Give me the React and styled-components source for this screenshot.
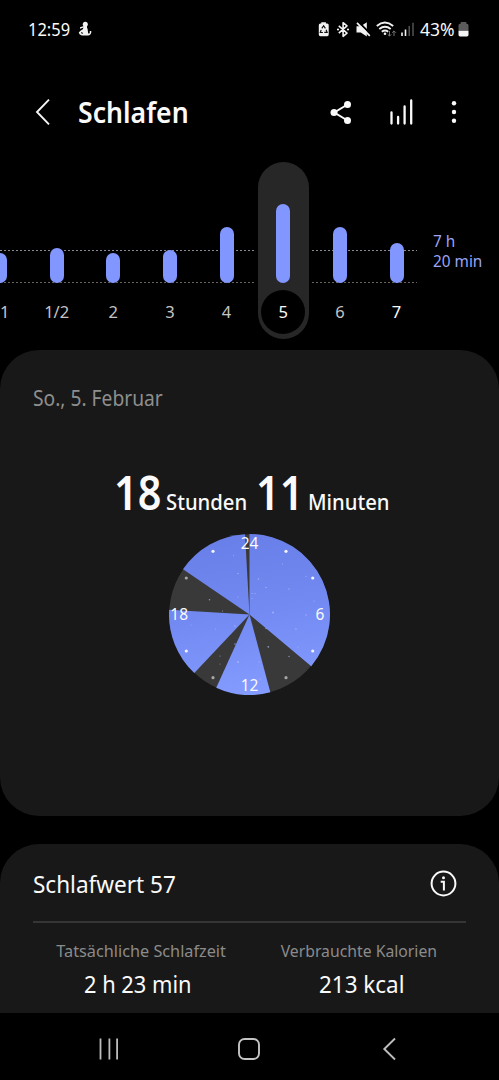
import React from 'react'
import styled, { createGlobalStyle } from 'styled-components'

const days = [
    { id: 1, label: '31', height: 30 },
    { id: 2, label: '1/2', height: 35 },
    { id: 3, label: '2', height: 30 },
    { id: 4, label: '3', height: 33 },
    { id: 5, label: '4', height: 56 },
    { id: 6, label: '5', height: 79, selected: true },
    { id: 7, label: '6', height: 56 },
    { id: 8, label: '7', height: 40, today: true },
];

const stats = [
    { id: 1, label: 'Tatsächliche Schlafzeit', value: '2 h 23 min', labelScale: 0.985, valueScale: 0.95, padding: '0 7px 0 0' },
    { id: 2, label: 'Verbrauchte Kalorien', value: '213 kcal', labelScale: 0.955, valueScale: 0.975, padding: '0 0 0 6px' },
];

// start and end angle of every sleep phase, clockwise from midnight
const phases = [
    [0, 129.9],
    [165, 204.4],
    [223.3, 273.3],
    [304.3, 356.8],
];

const hours = [
    { label: '24', x: 80.5, y: 15.2 },
    { label: '6', x: 151, y: 86.2 },
    { label: '12', x: 80.5, y: 156.5 },
    { label: '18', x: 10.2, y: 86.2 },
];

const stars = [
    [89.5, 45, 0.8], [97, 53.5, 0.7], [113.5, 30, 0.6], [120, 55, 0.7], [104, 78.5, 0.9],
    [137, 42.5, 0.6], [145, 67, 0.6], [137, 81, 0.7], [127, 95, 0.8], [69, 39.5, 0.7],
    [64.5, 21.5, 0.5], [83, 59.5, 0.6], [86, 59.5, 0.6], [83, 64.5, 0.5], [69, 63, 0.6],
    [40.5, 65.8, 0.8], [53.5, 77, 0.6], [99.3, 112.8, 0.9], [120, 122.5, 0.7], [97, 94.5, 0.7],
    [129, 113, 0.6], [66, 110, 0.8], [66, 92, 0.7], [51, 122, 0.6], [51, 130, 0.5],
    [69, 128, 0.9], [90, 128, 0.6], [91, 145, 0.6], [22, 91, 0.5], [46.5, 95, 0.5],
];

const point = (angle, r) => {
    const rad = (angle * Math.PI) / 180;
    return [80.5 + r * Math.sin(rad), 80.5 - r * Math.cos(rad)];
};

const wedge = ([from, to]) => {
    const [x1, y1] = point(from, 80.5);
    const [x2, y2] = point(to, 80.5);
    return `M80.5 80.5 L${x1} ${y1} A80.5 80.5 0 ${to - from > 180 ? 1 : 0} 1 ${x2} ${y2} Z`;
};

const inPhase = (angle) => phases.some(([from, to]) => angle >= from && angle <= to);

const SleepClock = () => (
    <Clock viewBox="0 0 161 161">
        <defs>
            <linearGradient id="sleep" gradientUnits="userSpaceOnUse" x1="60" y1="0" x2="85" y2="161">
                <stop offset="0" stopColor="#687ee8" />
                <stop offset="0.5" stopColor="#728af2" />
                <stop offset="1" stopColor="#849bff" />
            </linearGradient>
        </defs>
        <circle cx="80.5" cy="80.5" r="80.3" fill="#393939" />
        {phases.map(phase => (
            <path key={phase[0]} d={wedge(phase)} fill="url(#sleep)" />
        ))}
        {stars.map(([x, y, r]) => (
            <circle key={`${x}-${y}`} cx={x} cy={y} r={r} fill="#c6cfff" opacity="0.6" />
        ))}
        {[30, 60, 120, 150, 210, 240, 300, 330].map(angle => {
            const [x, y] = point(angle, 73);
            return <circle key={angle} cx={x} cy={y} r="1.6" fill={inPhase(angle) ? '#f1f3ff' : '#a6a6a6'} />;
        })}
        {hours.map(hour => (
            <text key={hour.label} x={hour.x} y={hour.y} textAnchor="middle">{hour.label}</text>
        ))}
    </Clock>
)

const StatusIcons = () => (
    <svg width="98" height="18" viewBox="318 20 98 18" fill="none">
        {/* battery saver */}
        <path d="M318.800 25q0-1.500 1.500-1.500h1V22.300h4.600v1.200h1.300q1.500 0 1.500 1.500v9.500q0 1.700-1.500 1.700h-6.900q-1.500 0-1.500-1.700z" fill="#f2f2f2" />
        <path d="M321.800 28.300l1.800-2.600 1.800 2.600M326.100 29.700l1 2.600h-2.800M322.900 32.500h-2.600l.9-2.600" stroke="#111" strokeWidth="1.200" />
        {/* bluetooth */}
        <path d="M338.800 25.800l8.200 7.400-3.900 3.100V22.700l3.900 3.100-8.200 7.400" stroke="#f2f2f2" strokeWidth="1.600" strokeLinejoin="round" />
        <circle cx="338" cy="29.500" r="1.100" fill="#f2f2f2" />
        <circle cx="348" cy="29.500" r="1.100" fill="#f2f2f2" />
        {/* muted */}
        <path d="M356.500 26.200h4.300l6-4v14.300l-6-4h-4.300z" fill="#f2f2f2" />
        <path d="M358 21.500l13 13" stroke="#000" strokeWidth="2" />
        <path d="M357 22.800l12.800 13" stroke="#f2f2f2" strokeWidth="1.700" />
        {/* wifi */}
        <path d="M376.800 26q8-6.800 16.400 0M379.300 29q5.700-4.500 11.400 0M381.800 31.700q3.200-2.400 6.400 0" stroke="#f2f2f2" strokeWidth="1.900" />
        <circle cx="385" cy="33.700" r="1.300" fill="#f2f2f2" />
        <path d="M389.500 31v5M387.700 34.300l1.800 1.800 1.800-1.800M394 36v-5M392.200 32.700l1.800-1.800 1.800 1.800" stroke="#777" strokeWidth="1" />
        {/* mobile signal */}
        <path d="M402 32.500V36M405.500 29.500V36" stroke="#f2f2f2" strokeWidth="1.600" />
        <path d="M409.200 26V36M413 22.700V36" stroke="#5e5e5e" strokeWidth="1.300" />
    </svg>
)

const App = () => (
    <Screen>
        <GlobalStyle />
        <StatusBar>
            <Time>12:59</Time>
            <svg width="14" height="16" viewBox="0 0 14 16" fill="#f2f2f2">
                <circle cx="7.300" cy="3.200" r="2.500" />
                <path d="M6 5h3q-.3 1.500.6 3l.6 4.500h1.200q.6-1 .4-2.500h1.500q.4 3.500-3 4.600H4Q1.200 13.800.7 11.500L2.800 9.500l2-1.200L5.500 6.500 2 7.800V6.300z" />
                <path d="M3 11.700l2 .6" stroke="#000" strokeWidth="1" />
            </svg>
            <StatusRight>
                <StatusIcons />
                <Percent>43%</Percent>
                <svg width="11" height="15" viewBox="0 0 11 15">
                    <path d="M.5 3.300q0-1.500 1.500-1.500h.7V0h5.600v1.800H9q1.500 0 1.500 1.500V8.800H.5z" fill="#5b5b5b" />
                    <path d="M.5 8.800h10v3.900q0 1.700-1.500 1.700H2Q.5 14.400.5 12.700z" fill="#f5f5f5" />
                </svg>
            </StatusRight>
        </StatusBar>

        <Header>
            <svg width="16" height="28" viewBox="0 0 16 28" fill="none">
                <path d="M14 1.700L2 14l12 12.300" stroke="#f5f5f5" strokeWidth="1.900" />
            </svg>
            <Title>Schlafen</Title>
            <Actions>
                <svg width="22" height="25" viewBox="0 0 22 25">
                    <path d="M17.500 4.500L4.300 12.500 17.500 20.500" fill="none" stroke="#fafafa" strokeWidth="2" />
                    <g fill="#fafafa">
                        <circle cx="17.500" cy="4.500" r="3.500" />
                        <circle cx="4" cy="12.500" r="3.500" />
                        <circle cx="17.500" cy="20.500" r="3.500" />
                    </g>
                </svg>
                <svg width="24" height="26" viewBox="0 0 24 26" stroke="#fafafa" strokeWidth="2.300" strokeLinecap="round">
                    <path d="M1.500 13.500V24.500M8.100 18V24.500M14.600 7.500V24.500M21.200 1.500V24.500" />
                </svg>
                <svg width="6" height="24" viewBox="0 0 6 24" fill="#fafafa">
                    <circle cx="3" cy="3.300" r="2.200" />
                    <circle cx="3" cy="12" r="2.200" />
                    <circle cx="3" cy="20.800" r="2.200" />
                </svg>
            </Actions>
        </Header>

        <Chart>
            <GridLine $top={88} $color="#8b8b95" />
            <GridLine $top={120} $color="#67655b" />
            <Days>
                {days.map(day => (
                    <Day key={day.id} $selected={day.selected}>
                        <BarSlot>
                            <Bar style={{ height: day.height }} />
                        </BarSlot>
                        <DayLabel $selected={day.selected} $bright={day.selected || day.today}>{day.label}</DayLabel>
                    </Day>
                ))}
            </Days>
            <Goal>
                <span>7 h</span>
                <span>20 min</span>
            </Goal>
        </Chart>

        <DurationCard>
            <DateText>So., 5. Februar</DateText>
            <Duration>
                <Amount>18</Amount>
                <Unit $width={90}>Stunden</Unit>
                <Amount>11</Amount>
                <Unit $width={78}>Minuten</Unit>
            </Duration>
            <SleepClock />
        </DurationCard>

        <ScoreCard>
            <ScoreHeader>
                <ScoreTitle>Schlafwert 57</ScoreTitle>
                <InfoIcon width="27" height="27" viewBox="0 0 27 27">
                    <circle cx="13.500" cy="13.500" r="11.900" strokeWidth="2" />
                    <path d="M10.700 11.800h3.200V20.500" strokeWidth="2" />
                    <circle cx="13.500" cy="7.700" r="1.500" fill="#fafafa" stroke="none" />
                </InfoIcon>
            </ScoreHeader>
            <Stats>
                {stats.map(stat => (
                    <Stat key={stat.id}>
                        <StatLabel $scale={stat.labelScale}>{stat.label}</StatLabel>
                        <StatValue $scale={stat.valueScale} $padding={stat.padding}>{stat.value}</StatValue>
                    </Stat>
                ))}
            </Stats>
        </ScoreCard>

        <NavBar>
            <svg width="20" height="24" viewBox="0 0 20 24" stroke="#bdbdbd" strokeWidth="1.800">
                <path d="M2.500 1.500v21M11.400 1.500v21M19.100 1.500v21" />
            </svg>
            <svg width="24" height="24" viewBox="0 0 24 24" fill="none" stroke="#c4c4c4" strokeWidth="1.900">
                <rect x="2" y="2" width="20" height="20" rx="5.500" />
            </svg>
            <svg width="16" height="24" viewBox="0 0 16 24" fill="none" stroke="#bdbdbd" strokeWidth="1.900">
                <path d="M15 1.500L4.300 12 15 22.500" />
            </svg>
        </NavBar>
    </Screen>
)

const GlobalStyle = createGlobalStyle`
    body{
        margin: 0;
        background: #000;
    }
    svg{
        display: block;
        flex: none;
    }
`

const Screen = styled.div`
    display: flex;
    flex-direction: column;
    width: 499px;
    height: 1080px;
    overflow: hidden;
    background: #000;
    color: #fafafa;
    font-family: 'Noto Sans', 'Open Sans', sans-serif;
    white-space: nowrap;
`

const StatusBar = styled.div`
    display: flex;
    align-items: center;
    height: 58px;
    padding: 0 30px 0 28px;
    font-size: 17.500px;
`

const Time = styled.span`
    width: 50px;
    transform: scaleX(0.94);
    transform-origin: left;
`

const StatusRight = styled.div`
    display: flex;
    align-items: center;
    margin-left: auto;
`

const Percent = styled.span`
    width: 38px;
    margin-left: 4px;
`

const Header = styled.header`
    display: flex;
    align-items: center;
    height: 60px;
    margin-top: 24px;
    padding: 0 42px 0 35px;
`

const Title = styled.h1`
    margin: 0 0 0 27px;
    font-size: 28.500px;
    font-weight: 600;
    line-height: 60px;
    transform: scaleX(0.935);
    transform-origin: left;
`

const Actions = styled.div`
    display: flex;
    align-items: center;
    gap: 37.500px;
    margin-left: auto;
`

const Chart = styled.section`
    position: relative;
    display: flex;
    height: 177px;
    margin-top: 20px;
`

const GridLine = styled.div`
    position: absolute;
    left: 0;
    top: ${p => p.$top}px;
    width: 417px;
    height: 1px;
    background: repeating-linear-gradient(90deg, ${p => p.$color} 0 2px, transparent 2px 4px);
`

const Days = styled.div`
    position: relative;
    display: grid;
    grid-template-columns: repeat(8, 56.650px);
    justify-items: center;
    margin-left: -28.300px;
`

const Day = styled.div`
    display: flex;
    flex-direction: column;
    align-items: center;
    width: 51px;
    height: 177px;
    border-radius: 26px;
    background: ${p => (p.$selected ? '#272727' : 'transparent')};
    box-shadow: ${p => (p.$selected ? '0 0 0 2px #000' : 'none')};
`

const BarSlot = styled.div`
    display: flex;
    align-items: flex-end;
    height: 121px;
`

const Bar = styled.div`
    width: 14px;
    border-radius: 7px;
    background: #8296ff;
`

const DayLabel = styled.span`
    width: 44px;
    margin-top: 7px;
    border-radius: 22px;
    background: ${p => (p.$selected ? '#000' : 'transparent')};
    color: ${p => (p.$bright ? '#fafafa' : '#c4c4c4')};
    font-size: 16.500px;
    line-height: 44px;
    text-align: center;
`

const Goal = styled.p`
    display: flex;
    flex-direction: column;
    margin: 69px 0 0 8px;
    color: #9ba4f6;
    font-size: 16.500px;
    line-height: 20px;
    transform: scaleX(0.93);
    transform-origin: left;
`

const Card = styled.section`
    flex: none;
    box-sizing: border-box;
    background: #181818;
`

const DurationCard = styled(Card)`
    display: flex;
    flex-direction: column;
    align-items: center;
    height: 466px;
    margin-top: 11px;
    padding: 33px 33px 0;
    border-radius: 39px;
`

const DateText = styled.p`
    align-self: flex-start;
    margin: 0;
    color: #8e8e8e;
    font-size: 21px;
    line-height: 30px;
    transform: scaleX(0.915);
    transform-origin: left;
`

const Duration = styled.div`
    display: flex;
    align-items: baseline;
    height: 60px;
    margin-top: 49px;
    line-height: 60px;
`

const Amount = styled.span`
    width: 52px;
    font-size: 46px;
    font-weight: 600;
    transform: scaleX(0.9);
    transform-origin: left;
`

const Unit = styled.span`
    width: ${p => p.$width}px;
    font-size: 22.500px;
    font-weight: 500;
    transform: scaleX(0.9);
    transform-origin: left;
`

const Clock = styled.svg`
    width: 161px;
    height: 161px;
    margin-top: 12px;
    text{
        fill: #fafafa;
        font-size: 15.500px;
    }
`

const ScoreCard = styled(Card)`
    height: 169px;
    margin-top: 28px;
    padding: 0 33px;
    border-radius: 39px 39px 0 0;
`

const ScoreHeader = styled.div`
    display: flex;
    align-items: center;
    justify-content: space-between;
    box-sizing: border-box;
    height: 79px;
    padding-right: 9px;
    border-bottom: 2px solid #353535;
`

const ScoreTitle = styled.h2`
    margin: 2px 0 0;
    font-size: 23px;
    font-weight: 400;
    transform: scaleX(0.98);
    transform-origin: left;
`

const InfoIcon = styled.svg`
    margin-top: 2px;
    fill: none;
    stroke: #fafafa;
`

const Stats = styled.div`
    display: grid;
    grid-template-columns: 217px 217px;
    padding-top: 17px;
`

const Stat = styled.div`
    display: flex;
    flex-direction: column;
    align-items: center;
`

const StatLabel = styled.span`
    color: #8b8b8b;
    font-size: 16.500px;
    line-height: 22px;
    transform: scaleX(${p => p.$scale});
`

const StatValue = styled.span`
    margin-top: 5px;
    padding: ${p => p.$padding};
    font-size: 23px;
    line-height: 34px;
    transform: scaleX(${p => p.$scale});
`

const NavBar = styled.nav`
    display: flex;
    align-items: center;
    justify-content: space-between;
    box-sizing: border-box;
    height: 67px;
    padding: 4px 103.500px 0 98px;
    background: #000;
`

export default App
